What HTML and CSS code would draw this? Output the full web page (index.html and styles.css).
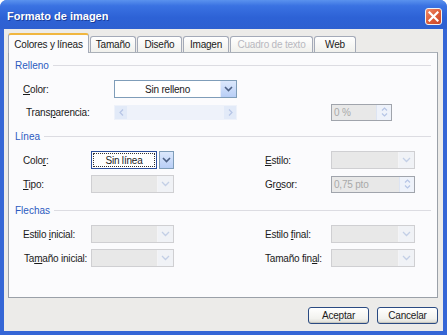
FILE: index.html
```html
<!DOCTYPE html>
<html lang="es">
<head>
    <meta charset="UTF-8">
    <title>Formato de imagen</title>
    <link rel="stylesheet" href="styles.css">
</head>
<body>
    <div class="window">
        <div class="titlebar">
            <span class="title">Formato de imagen</span>
            <span class="close">
                <svg width="11" height="11" viewBox="0 0 11 11"><path d="M1.5 1.5 L9.5 9.5 M9.5 1.5 L1.5 9.5" stroke="#fff" stroke-width="2.2" stroke-linecap="square"/></svg>
            </span>
        </div>
        <div class="client">
            <div class="tabs">
                <div class="tab active">Colores y líneas</div>
                <div class="tab">Tamaño</div>
                <div class="tab">Diseño</div>
                <div class="tab">Imagen</div>
                <div class="tab disabled">Cuadro de texto</div>
                <div class="tab">Web</div>
            </div>
            <div class="panel">
                <div class="section-head"><span>Relleno</span></div>
                <div class="row fill-row first">
                    <label><u>C</u>olor:</label>
                    <div class="combo">
                        <div class="combo-text">Sin relleno</div>
                        <div class="combo-btn"><svg width="9" height="6" viewBox="0 0 9 6"><path d="M1 1 L4.5 4.5 L8 1" fill="none" stroke="#4d6185" stroke-width="1.6"/></svg></div>
                    </div>
                </div>
                <div class="row fill-row second">
                    <label class="shift">Trans<u>p</u>arencia:</label>
                    <div class="scroll">
                        <div class="scroll-btn"><svg width="5" height="7" viewBox="0 0 5 7"><path d="M4 0.5 L1 3.5 L4 6.5" fill="none" stroke="#b6c5e6" stroke-width="1.2"/></svg></div>
                        <div class="scroll-track"></div>
                        <div class="scroll-btn"><svg width="5" height="7" viewBox="0 0 5 7"><path d="M1 0.5 L4 3.5 L1 6.5" fill="none" stroke="#b6c5e6" stroke-width="1.2"/></svg></div>
                    </div>
                    <span></span>
                    <div class="spin">
                        <div class="spin-text">0 %</div>
                        <div class="spin-btn">
                            <svg width="7" height="4" viewBox="0 0 7 4"><path d="M1 3.5 L3.5 1 L6 3.5" fill="none" stroke="#b6c5e6" stroke-width="1.2"/></svg>
                            <svg width="7" height="4" viewBox="0 0 7 4"><path d="M1 0.5 L3.5 3 L6 0.5" fill="none" stroke="#b6c5e6" stroke-width="1.2"/></svg>
                        </div>
                    </div>
                </div>

                <div class="section-head gap-line"><span>Línea</span></div>
                <div class="row grid-row first">
                    <label>Colo<u>r</u>:</label>
                    <div class="combo focus">
                        <div class="combo-text"><span class="dotted">Sin línea</span></div>
                        <div class="combo-btn"><svg width="9" height="6" viewBox="0 0 9 6"><path d="M1 1 L4.5 4.5 L8 1" fill="none" stroke="#4d6185" stroke-width="1.6"/></svg></div>
                    </div>
                    <span></span>
                    <label><u>E</u>stilo:</label>
                    <div class="combo off">
                        <div class="combo-text"></div>
                        <div class="combo-btn"><svg width="9" height="6" viewBox="0 0 9 6"><path d="M1 1 L4.5 4.5 L8 1" fill="none" stroke="#c3cfe6" stroke-width="1.3"/></svg></div>
                    </div>
                </div>
                <div class="row grid-row">
                    <label><u>T</u>ipo:</label>
                    <div class="combo off">
                        <div class="combo-text"></div>
                        <div class="combo-btn"><svg width="9" height="6" viewBox="0 0 9 6"><path d="M1 1 L4.5 4.5 L8 1" fill="none" stroke="#c3cfe6" stroke-width="1.3"/></svg></div>
                    </div>
                    <span></span>
                    <label>Gr<u>o</u>sor:</label>
                    <div class="spin">
                        <div class="spin-text">0,75 pto</div>
                        <div class="spin-btn">
                            <svg width="7" height="4" viewBox="0 0 7 4"><path d="M1 3.5 L3.5 1 L6 3.5" fill="none" stroke="#b6c5e6" stroke-width="1.2"/></svg>
                            <svg width="7" height="4" viewBox="0 0 7 4"><path d="M1 0.5 L3.5 3 L6 0.5" fill="none" stroke="#b6c5e6" stroke-width="1.2"/></svg>
                        </div>
                    </div>
                </div>

                <div class="section-head gap-arrows"><span>Flechas</span></div>
                <div class="row grid-row first">
                    <label>Estilo <u>i</u>nicial:</label>
                    <div class="combo off">
                        <div class="combo-text"></div>
                        <div class="combo-btn"><svg width="9" height="6" viewBox="0 0 9 6"><path d="M1 1 L4.5 4.5 L8 1" fill="none" stroke="#c3cfe6" stroke-width="1.3"/></svg></div>
                    </div>
                    <span></span>
                    <label>Estilo <u>f</u>inal:</label>
                    <div class="combo off">
                        <div class="combo-text"></div>
                        <div class="combo-btn"><svg width="9" height="6" viewBox="0 0 9 6"><path d="M1 1 L4.5 4.5 L8 1" fill="none" stroke="#c3cfe6" stroke-width="1.3"/></svg></div>
                    </div>
                </div>
                <div class="row grid-row">
                    <label class="shift-sm">Ta<u>m</u>año inicial:</label>
                    <div class="combo off">
                        <div class="combo-text"></div>
                        <div class="combo-btn"><svg width="9" height="6" viewBox="0 0 9 6"><path d="M1 1 L4.5 4.5 L8 1" fill="none" stroke="#c3cfe6" stroke-width="1.3"/></svg></div>
                    </div>
                    <span></span>
                    <label>Tamaño fin<u>a</u>l:</label>
                    <div class="combo off">
                        <div class="combo-text"></div>
                        <div class="combo-btn"><svg width="9" height="6" viewBox="0 0 9 6"><path d="M1 1 L4.5 4.5 L8 1" fill="none" stroke="#c3cfe6" stroke-width="1.3"/></svg></div>
                    </div>
                </div>
            </div>
            <div class="buttons">
                <button>Aceptar</button>
                <button>Cancelar</button>
            </div>
        </div>
    </div>
</body>
</html>
```

FILE: styles.css
```css
body {
    margin: 0;
    background: #ffffff;
    font-family: "Liberation Sans", Arial, sans-serif;
    font-size: 10px;
    letter-spacing: -0.2px;
    color: #1a1a1a;
}
.window {
    width: 447px;
    height: 335px;
    display: flex;
    flex-direction: column;
    background: #3566d6;
    border-radius: 7px 7px 0 0;
}
.titlebar {
    height: 29px;
    box-sizing: border-box;
    padding: 3px 5px 0 7px;
    display: flex;
    align-items: center;
    justify-content: space-between;
    background: linear-gradient(#5a92ee, #3a72e2 20%, #2d62d6 60%, #2e60d0);
    border-radius: 7px 7px 0 0;
}
.title {
    color: #ffffff;
    font-size: 11px;
    font-weight: bold;
    letter-spacing: 0;
    text-shadow: 1px 1px 0 #1a3d9a;
}
.close {
    width: 15px;
    height: 15px;
    display: flex;
    align-items: center;
    justify-content: center;
    border: 1px solid #f2f2f2;
    border-radius: 3px;
    background: linear-gradient(135deg, #f08a68, #dc5a36 55%, #c8442a);
}
.client {
    flex: 1;
    margin: 0 4px 4px;
    padding: 4px 5px 0 4px;
    background: #ecebe9;
    display: flex;
    flex-direction: column;
}

/* pestañas */
.tabs {
    height: 19px;
    display: flex;
    align-items: flex-end;
    position: relative;
    z-index: 1;
}
.tab {
    height: 16px;
    box-sizing: border-box;
    padding: 0;
    display: flex;
    align-items: center;
    justify-content: center;
    white-space: nowrap;
    border: 1px solid #a4aab8;
    border-bottom: none;
    border-radius: 3px 3px 0 0;
    background: linear-gradient(#ffffff, #f0f0ec);
    margin-right: 1px;
    color: #1a1a1a;
}
.tab:nth-child(2) { width: 46px; }
.tab:nth-child(3) { width: 45px; }
.tab:nth-child(4) { width: 46px; }
.tab:nth-child(5) { width: 83px; }
.tab:nth-child(6) { width: 42px; }
.tab.active {
    width: 81px;
    height: 20px;
    margin-bottom: -1px;
    background: #fbfbfd;
    border-top: 2px solid #f0b640;
}
.tab.disabled {
    color: #b8b8c0;
}
.panel {
    height: 246px;
    box-sizing: border-box;
    border: 1px solid #9aa0a8;
    border-top-color: #aab0b8;
    background: #fbfbfd;
    padding-top: 6px;
    display: flex;
    flex-direction: column;
}

/* secciones */
.section-head {
    height: 13px;
    display: flex;
    align-items: center;
    padding: 0 6px 0 6px;
    color: #2c5ac0;
    letter-spacing: 0;
}
.section-head::after {
    content: "";
    flex: 1;
    height: 1px;
    margin-left: 4px;
    background: #dcdce2;
}
.section-head.gap-line { margin-top: 9px; }
.section-head.gap-arrows { margin-top: 11px; }

.row {
    height: 18px;
    display: grid;
    align-items: center;
    padding-left: 14px;
    margin-top: 6px;
}
.row.first { margin-top: 8px; }
.fill-row.second { margin-top: 5px; }
.fill-row { grid-template-columns: 91px 123px 94px 61px; }
.grid-row { grid-template-columns: 68px 83px 91px 66px 84px; }
label.shift { padding-left: 3px; }
label.shift-sm { padding-left: 1px; }

/* combos */
.combo {
    height: 18px;
    box-sizing: border-box;
    display: flex;
    border: 1px solid #7f9db9;
    background: #ffffff;
}
.combo-text {
    flex: 1;
    display: flex;
    align-items: center;
    justify-content: center;
}
.combo-btn {
    width: 15px;
    display: flex;
    align-items: center;
    justify-content: center;
    background: linear-gradient(#dce8fc, #b8cef6);
    border-left: 1px solid #e8eefa;
}
.combo.focus {
    border: none;
    background: transparent;
}
.combo.focus .combo-text {
    border: 1px solid #2c4f9c;
    background: #ffffff;
    margin-right: 2px;
    padding: 1px;
}
.dotted {
    display: flex;
    align-items: center;
    justify-content: center;
    width: 100%;
    height: 100%;
    box-sizing: border-box;
    border: 1px dotted #333333;
}
.combo.focus .combo-btn {
    width: 13px;
    border: 1px solid #7f9db9;
}
.combo.off {
    border-color: #cfcfd2;
    background: #e8e8e8;
}
.combo.off .combo-btn {
    background: #f0f2f6;
    border-left: 1px solid #f4f4f6;
}

/* barra de desplazamiento */
.scroll {
    height: 15px;
    display: flex;
    background: #eef2fa;
}
.scroll-btn {
    width: 14px;
    display: flex;
    align-items: center;
    justify-content: center;
    background: #e2eaf8;
    border: 1px solid #eef2fa;
    box-sizing: border-box;
}
.scroll-track { flex: 1; }

/* campos numericos */
.spin {
    height: 17px;
    box-sizing: border-box;
    display: flex;
    border: 1px solid #a0a4ac;
    background: #e8e8e8;
}
.spin-text {
    flex: 1;
    display: flex;
    align-items: center;
    padding-left: 2px;
    color: #a8a8a8;
}
.spin-btn {
    width: 14px;
    display: flex;
    flex-direction: column;
    align-items: center;
    justify-content: center;
    gap: 2px;
    background: #eef2fa;
    border-left: 1px solid #dde4f2;
}

/* botones */
.buttons {
    display: flex;
    justify-content: flex-end;
    gap: 8px;
    margin-top: 9px;
}
button {
    width: 61px;
    height: 17px;
    padding: 0;
    font-family: "Liberation Sans", Arial, sans-serif;
    font-size: 10px;
    letter-spacing: -0.2px;
    color: #1a1a1a;
    border: 1px solid #2a4a82;
    border-radius: 3px;
    background: linear-gradient(#ffffff, #f2f2ee 70%, #dcdcd6);
    box-shadow: inset 0 -1px 0 #c8c8c0;
}
```
